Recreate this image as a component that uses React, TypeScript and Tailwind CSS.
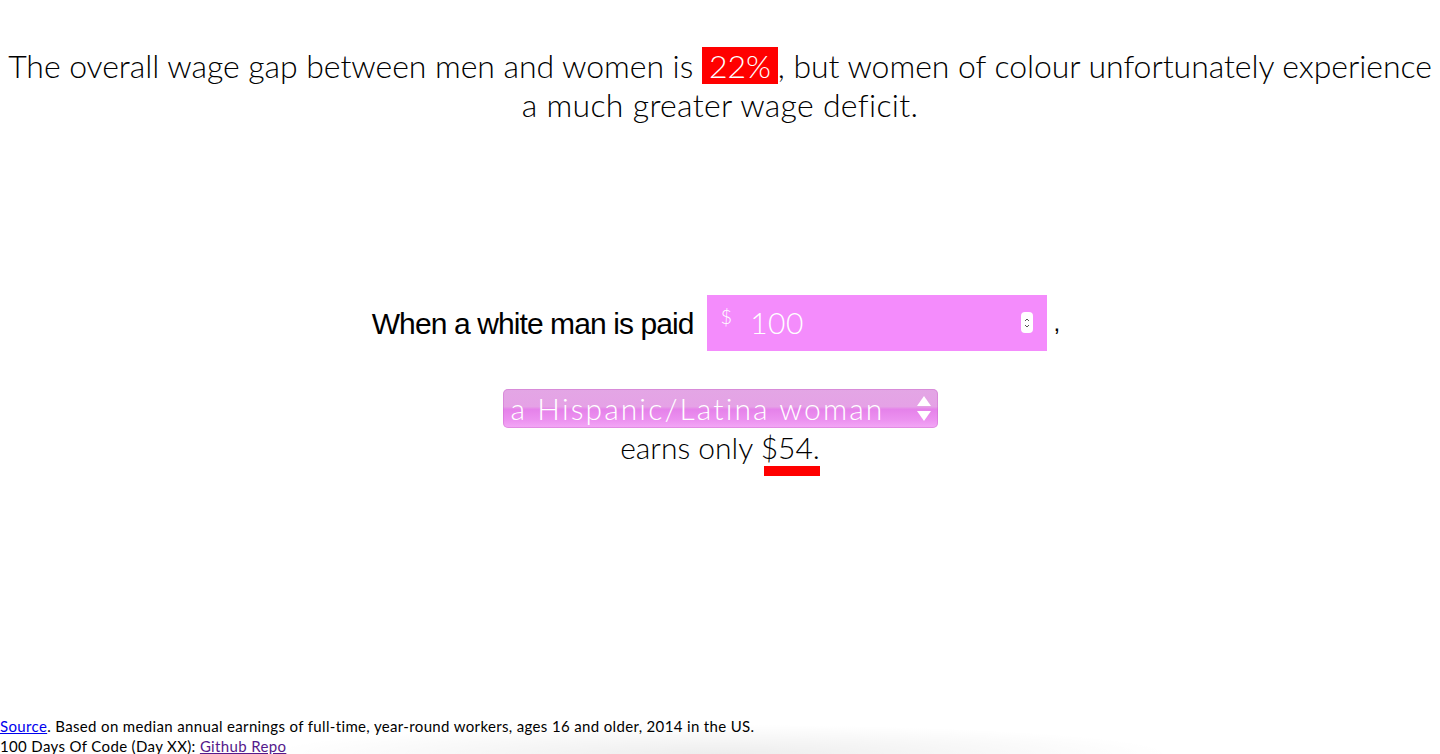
import React from "react";

export default function App() {
  const thin = { fontFamily: "Lato, 'Open Sans', sans-serif" };
  return (
    <div className="relative h-[754px] w-full overflow-hidden bg-white flex flex-col text-black" style={thin}>
      <h1 className="mt-[46px] text-center text-[32px] leading-[39px] font-light tracking-[-0.05px]">
        <span className="whitespace-nowrap">
          The overall wage gap between men and women is{" "}
          <span className="inline-block bg-[#ff0000] px-[7px] text-white leading-[37px]">22%</span>
          , but women of colour unfortunately experience
        </span>
        <br />
        <span className="tracking-[0.3px]">a much greater wage deficit.</span>
      </h1>

      <div className="mt-[171px] flex items-center justify-center pr-[8px]">
        <span className="text-[30px] tracking-[-0.9px] mr-[13px]" style={{ fontFamily: "'Liberation Sans', Arial, sans-serif" }}>
          When a white man is paid
        </span>
        <div className="flex h-[56px] w-[340px] items-start bg-[#f48cfc] pl-[14px] pr-[14px]">
          <span className="mt-[6px] text-[20px] font-light text-white">$</span>
          <span className="ml-[18px] mt-[8px] text-[30px] font-light leading-[38px] text-white tracking-[0.5px]">100</span>
          <span className="ml-auto mt-[17px] flex h-[21px] w-[12px] flex-col items-center justify-center rounded-[4px] bg-white">
            <svg width="8" height="16" viewBox="0 0 8 16" fill="none" stroke="#555" strokeWidth="1">
              <path d="M2 6 L4 4 L6 6" />
              <path d="M2 10 L4 12 L6 10" />
            </svg>
          </span>
        </div>
        <span className="ml-[7px] text-[24px]" style={{ fontFamily: "'Liberation Sans', Arial, sans-serif" }}>,</span>
      </div>

      <div className="mt-[38px] flex flex-col items-center">
        <div
          className="flex h-[39px] w-[435px] items-center rounded-[5px] pl-[8px] pr-[6px] shadow-[inset_0_0_0_1px_rgba(200,100,200,0.4)]"
          style={{ background: "linear-gradient(to bottom, #e3a6e5 0%, #e5a2e6 45%, #e582ea 52%, #ec92f0 80%, #f3a8f6 100%)" }}
        >
          <span className="text-[30px] font-light text-white tracking-[2.1px] leading-[39px]">a Hispanic/Latina woman</span>
          <svg className="ml-auto" width="16" height="30" viewBox="0 0 16 30" fill="white">
            <path d="M8 2 L15 12 L1 12 Z" />
            <path d="M1 17 L15 17 L8 27 Z" />
          </svg>
        </div>
        <div className="text-[30px] font-light leading-[38px] tracking-[0px]">
          earns only{" "}
          <span className="relative inline-block">
            $54.
            <span className="absolute left-[3px] right-0 -bottom-[10px] h-[10px] bg-[#ff0000]" />
          </span>
        </div>
      </div>

      <div className="mt-auto mb-[-2px] text-[15px] leading-[20px] tracking-[0.35px]" style={{ fontFamily: "Lato, sans-serif" }}>
        <div>
          <a href="#" className="text-[#0000ee] underline">Source</a>. Based on median annual earnings of full-time, year-round workers, ages 16 and older, 2014 in the US.
        </div>
        <div>
          100 Days Of Code (Day XX): <a href="#" className="text-[#551a8b] underline">Github Repo</a>
        </div>
      </div>

      <div
        className="pointer-events-none absolute bottom-0 left-[260px] h-[30px] w-[920px]"
        style={{ background: "radial-gradient(ellipse at 50% 100%, rgba(0,0,0,0.07), rgba(0,0,0,0) 70%)" }}
      />
    </div>
  );
}
